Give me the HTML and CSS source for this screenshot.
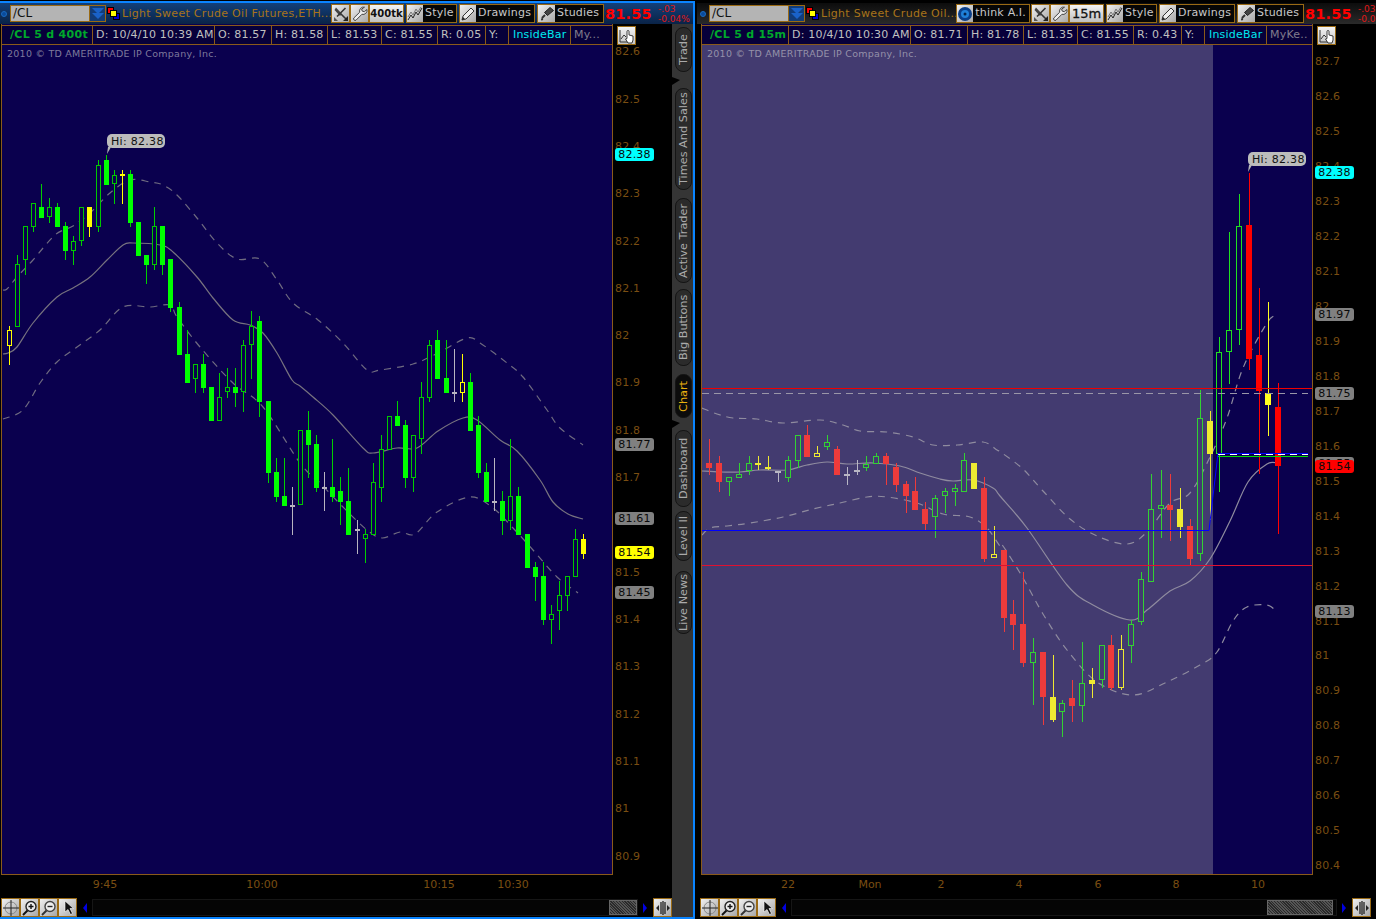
FILE: index.html
```html
<!DOCTYPE html>
<html lang="en">

<head>
  <meta charset="UTF-8" />
  <title>Chart /CL</title>
  <link rel="stylesheet" href="styles.css">
</head>

<body>
  <svg class="defs" width="0" height="0">
    <symbol id="i-tools" viewBox="0 0 16 16">
      <path d="M3 1.5 9 8l-2 2L1.5 4z" fill="#444" />
      <path d="M12.5 2 4 10.5M8 8l5 5" stroke="#333" stroke-width="1.6" fill="none" />
      <path d="M15 15H10l5-5z" fill="#222" />
      <path d="M1 15V11l4 4z" fill="#555" />
    </symbol>
    <symbol id="i-wrench" viewBox="0 0 16 16">
      <path d="M12.5 1.2a4 4 0 0 0-4.8 5L1.8 12a1.6 1.6 0 0 0 2.2 2.2l5.9-5.9a4 4 0 0 0 5-4.8l-2.5 2.2-2.2-.6-.5-2.1z" fill="#eee" stroke="#444" />
    </symbol>
    <symbol id="i-style" viewBox="0 0 16 16">
      <path d="M1 14 4 9l2 3 3-6 2 3 4-7" stroke="#222" fill="none" />
      <path d="M1 11 4 6l2 3 3-6 2 3 3-5" stroke="#777" fill="none" />
    </symbol>
    <symbol id="i-pencil" viewBox="0 0 16 16">
      <path d="M2 14l1-4 8-8 3 3-8 8z" fill="#eee" stroke="#333" />
      <path d="M2 14l1-3 2 2z" fill="#222" />
    </symbol>
    <symbol id="i-brush" viewBox="0 0 16 16">
      <path d="M11 1.5l3.5 3-6 5-3-3z" fill="#444" stroke="#222" />
      <path d="M6 9 3 12" stroke="#333" stroke-width="2" />
      <path d="M3 11.5c-1 1.500-1.500 2.500-.5 3 1.500.3 2-1 1.500-2z" fill="#333" />
    </symbol>
    <symbol id="i-hand" viewBox="0 0 16 16">
      <path d="M1 2v12h9" stroke="#333" fill="none" />
      <path d="M2 11l3-4 2 2" stroke="#333" fill="none" />
      <path d="M9 15l-2.500-4 1.500-.5V3.500a1 1 0 0 1 2 0V7l4 1v4l-1 3z" fill="#fff" stroke="#111" stroke-width=".8" />
    </symbol>
    <symbol id="i-cross" viewBox="0 0 16 16">
      <circle cx="8" cy="8" r="6" fill="none" stroke="#888" />
      <path d="M0 8h16M8 0v16" stroke="#222" />
    </symbol>
    <symbol id="i-zoomin" viewBox="0 0 16 16">
      <circle cx="9" cy="6.500" r="5" fill="#eee" stroke="#222" stroke-width="1.400" />
      <path d="M6.500 6.500h5M9 4v5" stroke="#111" stroke-width="1.400" />
      <path d="M5.500 10.500 1 15" stroke="#111" stroke-width="2" />
    </symbol>
    <symbol id="i-zoomout" viewBox="0 0 16 16">
      <circle cx="9" cy="6.500" r="5" fill="#eee" stroke="#444" stroke-width="1.400" />
      <path d="M6.500 6.500h5" stroke="#222" stroke-width="1.400" />
      <path d="M5.500 10.500 1 15" stroke="#333" stroke-width="2" />
    </symbol>
    <symbol id="i-cursor" viewBox="0 0 16 16">
      <path d="M5 1v11l3-2.500 2.500 5 2-1-2.500-5h3.500z" fill="#111" stroke="#fff" stroke-width=".6" />
    </symbol>
    <symbol id="i-squeeze" viewBox="0 0 16 16">
      <path d="M6 2v12M8 1v14M10 2v12" stroke="#222" stroke-width="1.300" />
      <path d="M1 8l3-3v6zM15 8l-3-3v6z" fill="#222" />
    </symbol>
    <symbol id="i-squares" viewBox="0 0 13 13">
      <rect x="0.500" y="0.500" width="6" height="6" fill="#f00" stroke="#000" />
      <rect x="6.500" y="6.500" width="6" height="6" fill="#00c" stroke="#000" />
      <rect x="3.500" y="3.500" width="6" height="6" fill="#ff0" stroke="#000" />
    </symbol>
    <symbol id="i-think" viewBox="0 0 16 16">
      <circle cx="8" cy="8" r="7" fill="#0a3f8a" />
      <circle cx="8" cy="8" r="4" fill="#1f80d8" />
      <circle cx="8" cy="8" r="1.500" fill="#04204a" />
    </symbol>
  </svg>

  <div class="screen">
    <section class="window window-left">
      <header class="topbar">
        <span class="dot"></span>
        <div class="symbol-box">/CL</div>
        <div class="drop"><span></span><span></span></div>
        <svg class="squares"><use href="#i-squares" /></svg>
        <div class="title title-long">Light Sweet Crude Oil Futures,ETH...</div>
        <div class="tile"><svg><use href="#i-tools" /></svg></div>
        <div class="tile"><svg><use href="#i-wrench" /></svg></div>
        <div class="tile tile-period period-tk">400tk</div>
        <div class="tool tool-style"><div class="tile-in"><svg><use href="#i-style" /></svg></div><span>Style</span></div>
        <div class="tool tool-drawings"><div class="tile-in"><svg><use href="#i-pencil" /></svg></div><span>Drawings</span></div>
        <div class="tool tool-studies"><div class="tile-in"><svg><use href="#i-brush" /></svg></div><span>Studies</span></div>
        <div class="last">81.55</div>
        <div class="change"><div>-.03</div><div>-0.04%</div></div>
      </header>

      <div class="body">
        <div class="main">
          <div class="chart-row">
            <div class="plot">
              <div class="data-row">
                <div class="cell cell-sym w-sym">/CL 5 d 400t</div>
                <div class="cell w-date">D: 10/4/10 10:39 AM</div>
                <div class="cell w-o">O: 81.57</div>
                <div class="cell w-h">H: 81.58</div>
                <div class="cell w-l">L: 81.53</div>
                <div class="cell w-c">C: 81.55</div>
                <div class="cell w-r">R: 0.05</div>
                <div class="cell w-y">Y:</div>
                <div class="cell cell-study w-inside">InsideBar</div>
                <div class="cell cell-dim w-my">My...</div>
              </div>
              <div class="canvas">
                <svg id="chartLeft" class="chart" viewBox="2 45 610 829"></svg>
                <div class="copyright">2010 © TD AMERITRADE IP Company, Inc.</div>
              </div>
            </div>
            <div class="axis" id="axisLeft">
              <div class="tile tile-hand"><svg><use href="#i-hand" /></svg></div>
            </div>
          </div>
          <div class="time-axis" id="timeLeft"></div>
          <div class="toolbar">
            <div class="tile"><svg><use href="#i-cross" /></svg></div>
            <div class="tile"><svg><use href="#i-zoomin" /></svg></div>
            <div class="tile"><svg><use href="#i-zoomout" /></svg></div>
            <div class="tile"><svg><use href="#i-cursor" /></svg></div>
            <span class="arrow arrow-left"></span>
            <div class="track"><div class="thumb thumb-small"></div></div>
            <span class="arrow arrow-right"></span>
            <div class="tile"><svg><use href="#i-squeeze" /></svg></div>
          </div>
        </div>

        <nav class="tabs">
          <span class="notch notch-top"></span>
          <span class="notch notch-mid"></span>
          <div class="tab tab-trade">Trade</div>
          <div class="tab tab-times">Times And Sales</div>
          <div class="tab tab-active">Active Trader</div>
          <div class="tab tab-big">Big Buttons</div>
          <div class="tab tab-chart">Chart</div>
          <div class="tab tab-dash">Dashboard</div>
          <div class="tab tab-level">Level II</div>
          <div class="tab tab-news">Live News</div>
        </nav>
      </div>
    </section>

    <section class="window window-right">
      <header class="topbar">
        <span class="dot"></span>
        <div class="symbol-box">/CL</div>
        <div class="drop"><span></span><span></span></div>
        <svg class="squares"><use href="#i-squares" /></svg>
        <div class="title title-short">Light Sweet Crude Oil...</div>
        <div class="tool tool-think"><div class="tile-in"><svg><use href="#i-think" /></svg></div><span>think A.I.</span></div>
        <div class="tile"><svg><use href="#i-tools" /></svg></div>
        <div class="tile"><svg><use href="#i-wrench" /></svg></div>
        <div class="tile tile-period period-m">15m</div>
        <div class="tool tool-style"><div class="tile-in"><svg><use href="#i-style" /></svg></div><span>Style</span></div>
        <div class="tool tool-drawings"><div class="tile-in"><svg><use href="#i-pencil" /></svg></div><span>Drawings</span></div>
        <div class="tool tool-studies"><div class="tile-in"><svg><use href="#i-brush" /></svg></div><span>Studies</span></div>
        <div class="last">81.55</div>
        <div class="change"><div>-.03</div><div>-0.04%</div></div>
      </header>

      <div class="body">
        <div class="main">
          <div class="chart-row">
            <div class="plot">
              <div class="data-row">
                <div class="cell cell-sym w-sym-r">/CL 5 d 15m</div>
                <div class="cell w-date">D: 10/4/10 10:30 AM</div>
                <div class="cell w-o">O: 81.71</div>
                <div class="cell w-h">H: 81.78</div>
                <div class="cell w-l">L: 81.35</div>
                <div class="cell w-c">C: 81.55</div>
                <div class="cell w-r">R: 0.43</div>
                <div class="cell w-y">Y:</div>
                <div class="cell cell-study w-inside">InsideBar</div>
                <div class="cell cell-dim w-my">MyKe...</div>
              </div>
              <div class="canvas">
                <svg id="chartRight" class="chart" viewBox="702 45 610 829"></svg>
                <div class="copyright">2010 © TD AMERITRADE IP Company, Inc.</div>
              </div>
            </div>
            <div class="axis" id="axisRight">
              <div class="tile tile-hand"><svg><use href="#i-hand" /></svg></div>
            </div>
          </div>
          <div class="time-axis" id="timeRight"></div>
          <div class="toolbar">
            <div class="tile"><svg><use href="#i-cross" /></svg></div>
            <div class="tile"><svg><use href="#i-zoomin" /></svg></div>
            <div class="tile"><svg><use href="#i-zoomout" /></svg></div>
            <div class="tile"><svg><use href="#i-cursor" /></svg></div>
            <span class="arrow arrow-left"></span>
            <div class="track"><div class="thumb thumb-wide"></div></div>
            <span class="arrow arrow-right"></span>
            <div class="tile"><svg><use href="#i-squeeze" /></svg></div>
          </div>
        </div>
      </div>
    </section>
  </div>

  <script src="chart.js"></script>
</body>

</html>
```

FILE: styles.css
```css
* {
  margin: 0;
  padding: 0;
  box-sizing: border-box;
}

body {
  width: 1376px;
  height: 919px;
  overflow: hidden;
  background: #000;
  font-family: "DejaVu Sans", sans-serif;
  font-size: 11px;
  color: #c0c0c0;
}

.defs {
  position: absolute;
}

.screen {
  display: flex;
  height: 919px;
}

/* Windows */
.window {
  display: flex;
  flex-direction: column;
  height: 918px;
  flex-shrink: 0;
}

.window-left {
  width: 695px;
  margin-top: 1px;
  border-top: 2px solid #0a84ff;
  border-right: 2px solid #0a84ff;
  border-bottom: 2px solid #0a84ff;
}

.window-right {
  width: 679px;
  margin-left: 2px;
  margin-top: 1px;
  padding-top: 2px;
}

/* Top bar */
.topbar {
  display: flex;
  align-items: center;
  height: 21px;
  flex-shrink: 0;
  overflow: hidden;
  white-space: nowrap;
}

.topbar > * {
  flex-shrink: 0;
}

.window-left .topbar {
  background: linear-gradient(#134079, #0a2347);
}

.window-right .topbar {
  padding-left: 2px;
  background: linear-gradient(#0c0c0c, #2a2a2a);
}

.dot {
  width: 6px;
  height: 6px;
  margin: 0 3px 0 1px;
  border-radius: 50%;
  background: #0a4a9a;
  border: 1px solid #1a6ac0;
}

.symbol-box {
  width: 80px;
  height: 17px;
  padding-left: 2px;
  border: 1px solid #9a6a14;
  background: #b4b4b4;
  color: #111;
  font-size: 12px;
  line-height: 15px;
}

.drop {
  display: flex;
  flex-direction: column;
  align-items: center;
  width: 16px;
  height: 17px;
  padding-top: 2px;
  border: 1px solid #9a6a14;
  border-left: 0;
  background: #123c78;
}

.drop span {
  width: 0;
  height: 0;
  margin-bottom: -1px;
  border-left: 6px solid transparent;
  border-right: 6px solid transparent;
  border-top: 6px solid #1a62c8;
}

.squares {
  width: 13px;
  height: 13px;
  margin: 0 2px 0 1px;
}

.title {
  color: #a8741a;
  font-size: 11px;
  letter-spacing: 0.3px;
  overflow: hidden;
}

.title-long {
  width: 209px;
}

.title-short {
  width: 135px;
}

.tile {
  display: flex;
  align-items: center;
  justify-content: center;
  width: 19px;
  height: 19px;
  flex-shrink: 0;
  border: 1px solid #9a6a14;
  background: linear-gradient(135deg, #f0f0f0, #a8a8a8);
}

.tile svg,
.tile-in svg {
  width: 16px;
  height: 16px;
}

.tile-period {
  color: #111;
  font-weight: bold;
  width: 35px;
  background: linear-gradient(#f4f4f4, #c0c0c0);
}

.period-tk {
  font-size: 10px;
}

.period-m {
  font-size: 13px;
  font-weight: normal;
  -webkit-text-stroke: 0.3px #111;
}

.tool {
  display: flex;
  align-items: center;
  height: 19px;
  padding-right: 3px;
  border: 1px solid #9a6a14;
  background: #060606;
  color: #c8c8c8;
  font-size: 11px;
  letter-spacing: 0.2px;
}

.tool span {
  margin-bottom: 3px;
}

.tile-in {
  display: flex;
  align-items: center;
  justify-content: center;
  width: 17px;
  height: 17px;
  margin-right: 2px;
  background: linear-gradient(135deg, #f0f0f0, #a8a8a8);
}

.tool-style {
  width: 51px;
  margin-left: 2px;
}

.tool-drawings {
  width: 76px;
  margin-left: 2px;
}

.tool-studies {
  width: 67px;
  margin-left: 2px;
}

.tool-think {
  width: 74px;
  margin-right: 1px;
}

.last {
  width: 53px;
  margin-left: 1px;
  color: #f00;
  font-size: 14.5px;
  font-weight: bold;
  letter-spacing: 0.2px;
}

.change {
  color: #e01818;
  font-size: 9px;
  line-height: 10px;
}

/* Body */
.body {
  display: flex;
  flex: 1;
  min-height: 0;
}

.main {
  display: flex;
  flex-direction: column;
  flex: 1;
  min-width: 0;
}

.chart-row {
  display: flex;
  height: 851px;
  flex-shrink: 0;
}

.plot {
  display: flex;
  flex-direction: column;
  flex-shrink: 0;
  border-left: 1px solid #8a5a1a;
  border-right: 1px solid #8a5a1a;
  border-bottom: 1px solid #8a5a1a;
  background: #0a004e;
}

.window-left .plot {
  margin-left: 1px;
  width: 612px;
}

.window-right .plot {
  margin-left: 4px;
  width: 612px;
}

.data-row {
  display: flex;
  height: 20px;
  flex-shrink: 0;
  margin-top: 1px;
  background: #07003a;
  border-top: 1px solid #8a5a1a;
  border-bottom: 1px solid #8a5a1a;
  white-space: nowrap;
}

.cell {
  padding-left: 3px;
  border-right: 1px solid #8a5a1a;
  line-height: 17px;
  letter-spacing: 0.2px;
  overflow: hidden;
}

.cell-sym {
  padding-left: 8px;
  color: #00a82c;
  font-weight: bold;
  font-size: 11px;
  letter-spacing: 0.3px;
}

.cell-study {
  padding-left: 4px;
  color: #00e8f0;
}

.cell-dim {
  color: #807c8c;
  border-right: 0;
}

.w-sym {
  width: 91px;
}

.w-sym-r {
  width: 87px;
}

.w-date {
  width: 122px;
}

.w-o {
  width: 57px;
}

.w-h {
  width: 56px;
}

.w-l {
  width: 54px;
}

.w-c {
  width: 56px;
}

.w-r {
  width: 48px;
}

.w-y {
  width: 23px;
}

.w-inside {
  width: 62px;
}

.w-my {
  width: 41px;
}

.canvas {
  position: relative;
  flex: 1;
  min-height: 0;
}

.chart {
  display: block;
  width: 100%;
  height: 100%;
}

.copyright {
  position: absolute;
  top: 3px;
  left: 5px;
  color: rgba(205, 205, 210, 0.6);
  font-size: 9.5px;
  letter-spacing: 0.25px;
}

.hi-text {
  font-family: "DejaVu Sans", sans-serif;
  font-size: 11px;
  fill: #111;
  letter-spacing: 0.3px;
}

/* Price axis */
.axis {
  position: relative;
  flex: 1;
}

.tile-hand {
  margin: 2px 0 0 4px;
  background: linear-gradient(#f4f4f4, #c4c4c4);
}

.price {
  position: absolute;
  left: 2px;
  color: #7a4e12;
  line-height: 14px;
  letter-spacing: 0.2px;
}

.price-tag {
  position: absolute;
  left: 2px;
  width: 39px;
  height: 13px;
  border-radius: 3px;
  color: #0a0a0a;
  line-height: 13px;
  text-align: center;
  letter-spacing: 0.2px;
}

.tag-gray {
  background: #808080;
}

.tag-cyan {
  background: #00ffff;
}

.tag-yellow {
  background: #ffff00;
}

.tag-red {
  background: #ff0000;
}

/* Time axis */
.time-axis {
  position: relative;
  height: 23px;
  flex-shrink: 0;
}

.time {
  position: absolute;
  top: 3px;
  color: #7a4e12;
  transform: translateX(-50%);
}

/* Bottom toolbar */
.toolbar {
  display: flex;
  align-items: center;
  height: 19px;
  flex-shrink: 0;
  padding-left: 1px;
}

.window-right .toolbar {
  padding-left: 3px;
  padding-right: 5px;
}

.arrow {
  width: 0;
  height: 0;
  flex-shrink: 0;
  border-top: 5px solid transparent;
  border-bottom: 5px solid transparent;
}

.arrow-left {
  margin: 0 5px 0 6px;
  border-right: 4px solid #0000e0;
}

.arrow-right {
  margin: 0 6px 0 5px;
  border-left: 4px solid #0000e0;
}

.track {
  display: flex;
  justify-content: flex-end;
  flex: 1;
  height: 17px;
  border: 1px solid #161616;
  background: #050505;
}

.thumb {
  background: repeating-linear-gradient(45deg, #555 0 1px, #2a2a2a 1px 2px), #444;
  border: 1px solid #666;
}

.thumb-small {
  width: 28px;
}

.thumb-wide {
  width: 66px;
  margin-right: 3px;
}

/* Side tabs */
.tabs {
  position: relative;
  display: flex;
  flex-direction: column;
  align-items: flex-end;
  width: 21px;
  flex-shrink: 0;
  padding-right: 1px;
  background: #353535;
}

.notch {
  position: absolute;
  left: 0;
  width: 0;
  height: 0;
  border-top: 3px solid transparent;
  border-bottom: 5px solid transparent;
  border-left: 8px solid #000;
}

.notch-top {
  top: 53px;
}

.notch-mid {
  top: 396px;
}

.tab {
  display: flex;
  align-items: center;
  justify-content: center;
  width: 17px;
  flex-shrink: 0;
  border: 1px solid #151515;
  border-radius: 8px;
  background: #2b2b2b;
  color: #aaa;
  font-size: 11.3px;
  writing-mode: vertical-rl;
  transform: rotate(180deg);
  white-space: nowrap;
}

.tab-trade {
  height: 45px;
  margin-top: 3px;
}

.tab-times {
  height: 102px;
  margin-top: 16px;
}

.tab-active {
  height: 85px;
  margin-top: 8px;
}

.tab-big {
  height: 77px;
  margin-top: 6px;
}

.tab-chart {
  height: 44px;
  margin-top: 8px;
  background: #0c0c0c;
  color: #e8b010;
}

.tab-dash {
  height: 77px;
  margin-top: 12px;
}

.tab-level {
  height: 50px;
  margin-top: 4px;
}

.tab-news {
  height: 63px;
  margin-top: 10px;
}
```

FILE: chart.js
```js
const NS = 'http://www.w3.org/2000/svg';

// [x, wick top, wick bottom, body top, body bottom, kind]
// kind: gs/gh green solid/hollow, ys/yh yellow, rs/rh red, w gray doji
const leftCandles = [
  [9, 326, 365, 330, 346, 'yh'], [17, 255, 327, 264, 327, 'gh'], [25, 226, 275, 226, 260, 'gh'],
  [33, 203, 232, 203, 227, 'gh'], [41, 184, 218, 207, 218, 'gs'], [49, 198, 223, 207, 217, 'gh'],
  [57, 203, 227, 207, 227, 'gs'], [65, 222, 260, 226, 251, 'gs'], [73, 236, 265, 241, 251, 'gh'],
  [81, 207, 246, 207, 241, 'gh'], [89, 207, 237, 207, 227, 'ys'], [98, 160, 232, 165, 227, 'gh'],
  [106, 155, 185, 160, 185, 'gs'], [114, 170, 204, 175, 184, 'gh'], [122, 170, 204, 174, 176, 'ys'],
  [130, 170, 227, 174, 223, 'gs'], [138, 222, 256, 222, 256, 'gs'], [146, 255, 284, 255, 265, 'gs'],
  [154, 207, 270, 226, 265, 'gh'], [162, 226, 275, 226, 265, 'gs'], [170, 259, 312, 259, 308, 'gs'],
  [179, 302, 355, 307, 355, 'gs'], [187, 330, 383, 354, 383, 'gs'], [195, 364, 393, 364, 379, 'gh'],
  [203, 354, 393, 364, 388, 'gs'], [211, 387, 421, 387, 421, 'gs'], [219, 373, 421, 397, 421, 'gh'],
  [227, 368, 398, 387, 392, 'gh'], [235, 368, 407, 387, 393, 'gs'], [243, 340, 412, 345, 392, 'gh'],
  [251, 311, 379, 326, 345, 'gh'], [259, 316, 417, 321, 402, 'gs'], [268, 401, 483, 401, 473, 'gs'],
  [276, 458, 502, 472, 497, 'gs'], [284, 458, 506, 496, 506, 'gs'], [292, 487, 535, 505, 507, 'w'],
  [300, 430, 505, 430, 505, 'gh'], [308, 411, 478, 430, 445, 'gs'], [316, 435, 492, 444, 488, 'gs'],
  [324, 472, 511, 487, 489, 'w'], [332, 439, 502, 487, 497, 'gs'], [340, 477, 525, 491, 502, 'gs'],
  [348, 468, 535, 501, 535, 'gs'], [357, 520, 554, 529, 531, 'w'], [365, 529, 563, 534, 539, 'gh'],
  [373, 463, 535, 482, 535, 'gh'], [381, 435, 502, 449, 488, 'gh'], [389, 416, 450, 416, 450, 'gh'],
  [397, 401, 426, 416, 426, 'gs'], [405, 420, 488, 425, 478, 'gs'], [413, 435, 492, 435, 478, 'gh'],
  [421, 382, 454, 397, 439, 'gh'], [429, 340, 402, 345, 398, 'gh'], [437, 330, 379, 340, 379, 'gs'],
  [446, 340, 393, 378, 393, 'gs'], [454, 349, 402, 392, 394, 'w'], [462, 354, 402, 382, 393, 'yh'],
  [470, 373, 431, 382, 431, 'gs'], [478, 416, 478, 425, 473, 'gs'], [486, 463, 502, 472, 502, 'gs'],
  [494, 458, 511, 501, 503, 'w'], [502, 491, 535, 501, 521, 'gs'], [510, 439, 530, 496, 521, 'gh'],
  [518, 487, 535, 496, 535, 'gs'], [527, 534, 568, 534, 568, 'gs'], [535, 562, 601, 567, 577, 'gs'],
  [543, 562, 625, 576, 620, 'gs'], [551, 605, 644, 614, 620, 'gh'], [559, 581, 630, 595, 611, 'gh'],
  [567, 576, 611, 576, 596, 'gh'], [575, 529, 577, 539, 577, 'gh'], [583, 534, 559, 539, 554, 'ys']
];

const rightCandles = [
  [709, 439, 475, 463, 468, 'rs'], [719, 456, 492, 463, 482, 'rs'], [729, 477, 496, 477, 482, 'gh'],
  [739, 463, 478, 474, 478, 'gh'], [749, 456, 475, 463, 471, 'gh'], [758, 456, 470, 463, 465, 'ys'],
  [768, 456, 470, 467, 469, 'ys'], [778, 471, 482, 471, 472, 'w'], [788, 456, 482, 460, 478, 'gh'],
  [798, 435, 468, 435, 461, 'gh'], [807, 425, 457, 435, 457, 'rs'], [817, 446, 457, 453, 457, 'yh'],
  [827, 435, 450, 442, 447, 'gh'], [837, 446, 475, 449, 475, 'rs'], [847, 467, 485, 474, 476, 'w'],
  [857, 460, 475, 470, 472, 'w'], [866, 456, 471, 464, 468, 'gh'], [876, 453, 464, 456, 464, 'gh'],
  [886, 453, 485, 456, 464, 'rs'], [896, 463, 492, 467, 485, 'rs'], [906, 481, 513, 484, 496, 'rs'],
  [915, 477, 510, 491, 510, 'rs'], [925, 502, 530, 509, 524, 'rs'], [935, 495, 538, 498, 517, 'gh'],
  [945, 488, 513, 491, 496, 'gh'], [955, 484, 506, 488, 492, 'gh'], [964, 453, 492, 460, 492, 'gh'],
  [974, 463, 489, 463, 489, 'ys'], [984, 477, 562, 488, 559, 'rs'], [994, 526, 558, 554, 558, 'yh'],
  [1004, 550, 632, 550, 618, 'rs'], [1013, 600, 650, 614, 625, 'rs'], [1023, 572, 667, 624, 663, 'rs'],
  [1033, 638, 705, 652, 663, 'gh'], [1043, 652, 725, 652, 697, 'rs'], [1053, 655, 722, 697, 720, 'ys'],
  [1062, 700, 737, 703, 712, 'gh'], [1072, 680, 722, 698, 706, 'rs'], [1082, 642, 722, 683, 706, 'gh'],
  [1092, 668, 698, 680, 684, 'ys'], [1102, 645, 688, 645, 680, 'gh'], [1111, 635, 690, 645, 688, 'rs'],
  [1121, 635, 690, 649, 688, 'yh'], [1131, 620, 663, 624, 646, 'gh'], [1141, 572, 625, 579, 622, 'gh'],
  [1151, 474, 582, 509, 582, 'gh'], [1161, 470, 538, 505, 509, 'gh'], [1170, 474, 541, 505, 510, 'rs'],
  [1180, 488, 538, 509, 527, 'ys'], [1190, 519, 565, 526, 559, 'rs'], [1200, 390, 561, 418, 554, 'gh'],
  [1210, 411, 520, 421, 454, 'ys'], [1219, 337, 492, 352, 454, 'gh'], [1229, 232, 384, 330, 352, 'gh'],
  [1239, 194, 345, 226, 330, 'gh'], [1249, 173, 370, 225, 359, 'rs'], [1259, 288, 474, 355, 391, 'rs'],
  [1268, 302, 436, 393, 405, 'ys'], [1278, 383, 534, 407, 466, 'rs']
];

const leftBands = {
  mid: '3,354 8,353 17,347 33,323 57,297 73,288 90,277 107,260 123,245 133,243 160,245 173,252 197,277 213,298 233,320 250,325 263,333 277,353 292,380 300,386 313,397 333,415 363,448 373,453 397,448 417,448 438,431 463,418 477,420 500,440 517,451 540,480 553,502 568,514 583,519',
  up: '3,290 7,289 17,277 33,260 55,235 73,226 90,213 110,193 130,180 150,182 163,185 177,195 197,218 217,243 237,259 260,259 277,280 293,303 318,320 343,343 367,370 380,370 413,364 438,353 467,338 480,343 507,363 523,377 547,410 560,428 583,445',
  low: '3,419 23,410 40,383 57,362 77,347 100,330 123,307 150,307 170,305 177,317 200,347 233,383 263,407 300,463 320,483 343,507 367,530 382,538 400,532 415,534 437,512 470,497 493,508 513,528 533,550 557,577 578,593'
};

const rightBands = {
  mid: '702,471 720,472 740,472 760,470 787,470 807,465 827,462 847,464 873,463 900,466 920,473 940,479 953,481 973,480 993,488 1000,496 1027,528 1067,585 1093,605 1130,620 1147,610 1170,591 1190,581 1210,559 1230,521 1248,482 1267,464 1278,463',
  up: '702,408 717,414 733,418 757,419 783,423 820,420 843,425 860,431 887,432 913,437 933,445 957,445 983,442 997,450 1002,453 1023,469 1043,491 1070,519 1097,536 1127,544 1147,532 1170,503 1190,493 1210,457 1227,418 1243,368 1267,323 1277,315',
  low: '702,535 710,528 727,526 750,523 783,517 813,509 840,503 867,497 887,497 917,503 943,514 970,517 987,528 1000,546 1003,546 1023,578 1043,614 1067,650 1097,682 1133,695 1167,682 1200,665 1217,652 1233,621 1247,607 1267,605 1277,612'
};

const leftAxis = [
  ['82.6', 51], ['82.5', 99], ['82.4', 146], ['82.3', 193], ['82.2', 241], ['82.1', 288], ['82', 335], ['81.9', 382],
  ['81.8', 430], ['81.7', 477], ['81.5', 572], ['81.4', 619], ['81.3', 666], ['81.2', 714], ['81.1', 761],
  ['81', 808], ['80.9', 856]
];

const rightAxis = [
  ['82.7', 61], ['82.6', 96], ['82.5', 131], ['82.4', 166], ['82.3', 201], ['82.2', 236], ['82.1', 271], ['82', 306],
  ['81.9', 341], ['81.8', 376], ['81.7', 411], ['81.6', 446], ['81.5', 481], ['81.4', 516], ['81.3', 551], ['81.2', 586],
  ['81.1', 621], ['81', 655], ['80.9', 690], ['80.8', 725], ['80.7', 760], ['80.6', 795], ['80.5', 830], ['80.4', 865]
];

const leftTags = [
  ['82.38', 154, 'cyan'], ['81.77', 444, 'gray'], ['81.61', 518, 'gray'], ['81.54', 552, 'yellow'], ['81.45', 592, 'gray']
];

const rightTags = [
  ['82.38', 172, 'cyan'], ['81.97', 314, 'gray'], ['81.75', 393, 'gray'], ['81.55', 463, 'gray'], ['81.54', 466, 'red'], ['81.13', 611, 'gray']
];

function add(svg, name, attrs) {
  const el = document.createElementNS(NS, name);
  for (const key in attrs) el.setAttribute(key, attrs[key]);
  svg.appendChild(el);
  return el;
}

// catmull-rom through the points so the bands come out round
function smoothPath(points) {
  const p = points.split(' ').map(s => s.split(',').map(Number));
  let d = `M${p[0][0]} ${p[0][1]}`;
  for (let i = 0; i < p.length - 1; i++) {
    const a = p[i - 1] || p[i];
    const b = p[i];
    const c = p[i + 1];
    const e = p[i + 2] || c;
    d += `C${b[0] + (c[0] - a[0]) / 6} ${b[1] + (c[1] - a[1]) / 6} ${c[0] - (e[0] - b[0]) / 6} ${c[1] - (e[1] - b[1]) / 6} ${c[0]} ${c[1]}`;
  }
  return d;
}

function drawLine(svg, points, color, dash) {
  add(svg, 'path', {
    d: smoothPath(points), fill: 'none', stroke: color, 'stroke-width': 1.2,
    'stroke-dasharray': dash || 'none'
  });
}

function drawCandle(svg, c, width, colors) {
  const [x, wickTop, wickBot, bodyTop, bodyBot, kind] = c;
  const left = x - Math.floor(width / 2);
  const hollow = kind[1] === 'h';
  const main = colors[kind[0]];
  const crisp = 'crispEdges';

  add(svg, 'rect', {
    x: x, y: wickTop, width: 1, height: wickBot - wickTop,
    fill: kind[0] === 'g' ? colors.gw : main, 'shape-rendering': crisp
  });

  if (hollow) {
    add(svg, 'rect', {
      x: left + 0.5, y: bodyTop + 0.5, width: width - 1, height: bodyBot - bodyTop - 1,
      fill: colors.bg, stroke: kind[0] === 'g' ? colors.gh : main, 'shape-rendering': crisp
    });
  } else {
    add(svg, 'rect', {
      x: left, y: bodyTop, width: width, height: Math.max(bodyBot - bodyTop, 2),
      fill: main, 'shape-rendering': crisp
    });
  }
}

function drawBubble(svg, x, y, text) {
  add(svg, 'path', { d: `M${x + 4} ${y + 13}l-4 7 1-7z`, fill: '#b8b8b8' });
  add(svg, 'rect', { x: x, y: y, width: 58, height: 14, rx: 5, fill: '#bcbcbc' });
  const label = add(svg, 'text', { x: x + 4, y: y + 10.5, class: 'hi-text' });
  label.textContent = text;
}

function fillAxis(box, rows, tags, windowTop) {
  rows.forEach(([text, y]) => {
    const el = document.createElement('div');
    el.className = 'price';
    el.textContent = text;
    el.style.top = (y - windowTop - 6) + 'px';
    box.appendChild(el);
  });
  tags.forEach(([text, y, color]) => {
    const el = document.createElement('div');
    el.className = 'price-tag tag-' + color;
    el.textContent = text;
    el.style.top = (y - windowTop - 6) + 'px';
    box.appendChild(el);
  });
}

function fillTime(box, rows, offset) {
  rows.forEach(([text, x]) => {
    const el = document.createElement('div');
    el.className = 'time';
    el.textContent = text;
    el.style.left = (x - offset) + 'px';
    box.appendChild(el);
  });
}

const bright = { g: '#00ff00', gh: '#00c800', gw: '#00d000', y: '#ffff00', r: '#ff0000', w: '#b8b4c0', bg: '#0a004e' };
const shaded = { g: '#32d232', gh: '#32d232', gw: '#32d232', y: '#eeea32', r: '#ee3b3b', w: '#b8b6c4', bg: '#433b70' };
const onDark = { g: '#20e020', gh: '#20e020', gw: '#20e020', y: '#ffff20', r: '#ff0000', w: '#b8b4c0', bg: '#0a004e' };

// left chart
const left = document.getElementById('chartLeft');
drawLine(left, leftBands.low, '#6f6a80', '7 6');
drawLine(left, leftBands.up, '#6f6a80', '7 6');
drawLine(left, leftBands.mid, '#77727f');
leftCandles.forEach(c => drawCandle(left, c, 5, bright));
drawBubble(left, 107, 134, 'Hi: 82.38');

// right chart
const right = document.getElementById('chartRight');
add(right, 'rect', { x: 702, y: 45, width: 511, height: 829, fill: '#433b70', 'shape-rendering': 'crispEdges' });
drawLine(right, rightBands.low, '#8f8b9f', '7 6');
drawLine(right, rightBands.up, '#8f8b9f', '7 6');
drawLine(right, rightBands.mid, '#8f8b9f');
rightCandles.forEach(c => drawCandle(right, c, 6, c[0] < 1213 ? shaded : onDark));

const hline = (x1, y1, x2, y2, color, dash) => add(right, 'line', {
  x1: x1, y1: y1, x2: x2, y2: y2, stroke: color, 'stroke-dasharray': dash || 'none',
  'shape-rendering': x1 === x2 || y1 === y2 ? 'crispEdges' : 'auto'
});
hline(702, 388.5, 1312, 388.5, '#f00000');
hline(702, 393.5, 1308, 393.5, '#9a96a8', '7 5');
hline(702, 565.5, 1312, 565.5, '#e01030');
hline(702, 530.5, 1209, 530.5, '#0000ff');
hline(1209, 530.5, 1218, 453.5, '#0000ff');
hline(1218, 453.5, 1308, 453.5, '#0000ff');
hline(1218, 454.5, 1308, 454.5, '#ffffff', '7 5');
hline(1218, 456.5, 1308, 456.5, '#00e000');
drawBubble(right, 1248, 152, 'Hi: 82.38');

fillAxis(document.getElementById('axisLeft'), leftAxis, leftTags, 24);
fillAxis(document.getElementById('axisRight'), rightAxis, rightTags, 24);
fillTime(document.getElementById('timeLeft'), [['9:45', 105], ['10:00', 262], ['10:15', 439], ['10:30', 513]], 0);
fillTime(document.getElementById('timeRight'), [['22', 788], ['Mon', 870], ['2', 941], ['4', 1019], ['6', 1098], ['8', 1176], ['10', 1258]], 697);
```
